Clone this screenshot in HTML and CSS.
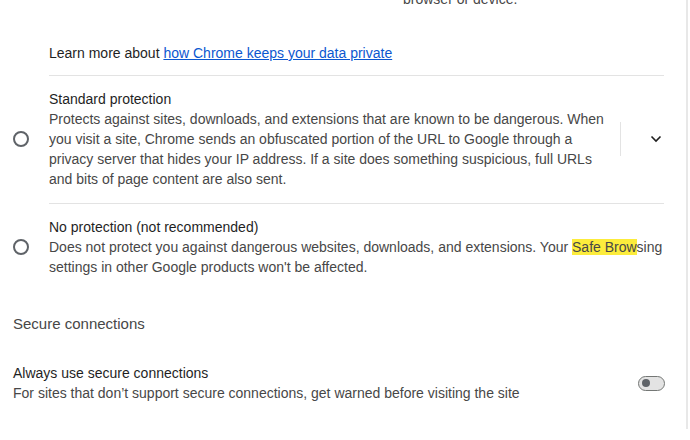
FILE: index.html
```html
<!DOCTYPE html>
<html lang="en">
<head>
    <meta charset="UTF-8">
    <title>Privacy and security</title>
    <link rel="stylesheet" href="styles.css">
</head>
<body>

    <div id="page">
        <!-- tail of the card above -->
        <div class="cutLine">browser or device.</div>

        <div class="learnMore">
            Learn more about <a href="#">how Chrome keeps your data private</a>
        </div>

        <div class="divider"></div>

        <!-- Standard protection -->
        <div class="option">
            <span class="radio"></span>
            <div class="optionText narrow">
                <div class="optionTitle">Standard protection</div>
                <div class="optionDesc">Protects against sites, downloads, and extensions that are known to be dangerous. When you visit a site, Chrome sends an obfuscated portion of the URL to Google through a privacy server that hides your IP address. If a site does something suspicious, full URLs and bits of page content are also sent.</div>
            </div>
            <div class="expand">
                <svg width="12" height="8" viewBox="0 0 12 8">
                    <path d="M1.5 1.5 L6 6 L10.5 1.5" fill="none" stroke="#1f1f1f" stroke-width="1.6"/>
                </svg>
            </div>
        </div>

        <div class="divider"></div>

        <!-- No protection -->
        <div class="option">
            <span class="radio"></span>
            <div class="optionText">
                <div class="optionTitle">No protection (not recommended)</div>
                <div class="optionDesc">Does not protect you against dangerous websites, downloads, and extensions. Your <mark>Safe Brow</mark>sing settings in other Google products won't be affected.</div>
            </div>
        </div>

        <h2 class="sectionTitle">Secure connections</h2>

        <div class="toggleRow">
            <div>
                <div class="optionTitle">Always use secure connections</div>
                <div class="optionDesc">For sites that don’t support secure connections, get warned before visiting the site</div>
            </div>
            <span class="toggle"><span class="knob"></span></span>
        </div>
    </div>

</body>
</html>
```

FILE: styles.css
```css
body {
    margin: 0;
    padding: 0;
    font-family: "Liberation Sans", Arial, sans-serif;
    font-size: 14px;
    line-height: 20px;
    color: #1f1f1f;
    background: #fff;
    overflow: hidden;
}

#page {
    width: 686px;
    height: 440px;
    border-right: 2px solid #e8e8e8;
}

.cutLine {
    margin-top: -11px;
    padding-left: 403px;
    color: #474747;
}

.learnMore {
    margin-top: 34px;
    padding-left: 49px;
}

.learnMore a {
    color: #0b57d0;
}

.divider {
    margin: 12px 22px 0 49px;
    border-top: 1px solid #e3e3e3;
}

.option {
    display: flex;
    align-items: center;
    padding: 13px 0 14px 0;
}

.option + .divider {
    margin-top: 0;
}

.radio {
    width: 12px;
    height: 12px;
    border: 2px solid #5f6368;
    border-radius: 50%;
    margin: 0 20px 0 13px;
    flex-shrink: 0;
}

.optionText {
    width: 616px;
}

.optionText.narrow {
    width: 562px;
}

.optionDesc {
    color: #474747;
}

mark {
    background: #fcec3c;
    color: #474747;
}

.expand {
    margin-left: 9px;
    height: 34px;
    border-left: 1px solid #e3e3e3;
    display: flex;
    align-items: center;
    padding-left: 29px;
}

.sectionTitle {
    margin: 23px 0 0 13px;
    font-size: 15px;
    font-weight: normal;
    line-height: 20px;
    color: #474747;
}

.toggleRow {
    display: flex;
    align-items: center;
    justify-content: space-between;
    margin: 29px 21px 0 13px;
}

.toggle {
    box-sizing: border-box;
    width: 27px;
    height: 15px;
    border: 1px solid #747775;
    border-radius: 8px;
    background: #e3e3e3;
    display: flex;
    align-items: center;
    padding-left: 3px;
}

.knob {
    width: 8px;
    height: 8px;
    border-radius: 50%;
    background: #5f6368;
}
```
